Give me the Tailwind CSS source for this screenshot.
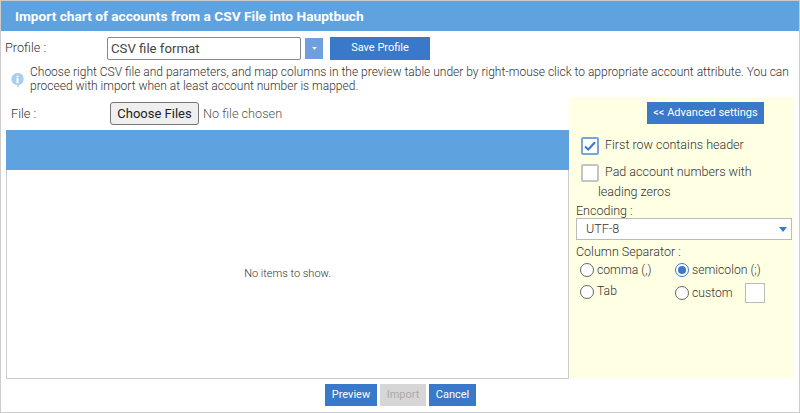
<!DOCTYPE html>
<html lang="en">
<head>
  <meta charset="UTF-8" />
  <title>Import chart of accounts</title>
  <script src="https://cdn.jsdelivr.net/npm/@tailwindcss/browser@4"></script>
</head>
<body class="w-[800px] h-[413px] overflow-hidden bg-white font-['Roboto',sans-serif] font-light text-[#333]">
  <div class="w-[800px] h-[413px] border border-[#ccc] flex flex-col">
    <!-- title -->
    <div class="h-[30px] shrink-0 bg-[#5fa2e0] text-white text-[13.7px] font-bold pl-[14px] leading-[30px]">Import chart of accounts from a CSV File into Hauptbuch</div>

    <!-- profile row -->
    <div class="flex items-center h-[26px] mt-[4px] shrink-0">
      <div class="w-[106px] pl-[4px] text-[12.7px]">Profile :</div>
      <div class="w-[194px] h-[23px] border border-[#888] rounded-[2px] text-[13.2px] leading-[21px] pl-[3px] font-normal text-[#444]">CSV file format</div>
      <div class="w-[18px] h-[21px] ml-[4px] bg-[#6f9fdc] flex items-center justify-center">
        <svg width="5" height="3" viewBox="0 0 6 4"><path d="M0 0h6L3 4z" fill="#fff"/></svg>
      </div>
      <button class="w-[100px] h-[23px] ml-[7px] bg-[#3a78c9] text-white text-[11px] font-normal leading-[21px] pb-[3px]">Save Profile</button>
    </div>

    <!-- info -->
    <div class="flex h-[32px] mt-[4px] shrink-0 text-[12px] leading-[14px]">
      <div class="w-[29px] pl-[9px] pt-[7px] shrink-0">
        <svg width="15" height="16" viewBox="0 0 15 16">
          <path d="M7.5 1a6 6 0 0 1 2 11.7c-.5 1.3-1.6 2.3-3 2.8.6-.9.8-1.7.7-2.5A6 6 0 0 1 7.5 1z" fill="#a9cdf0"/>
          <rect x="6.5" y="3.4" width="2" height="2" rx="1" fill="#fff"/>
          <rect x="6.5" y="6.2" width="2" height="5" fill="#fff"/>
        </svg>
      </div>
      <p class="w-[765px]">Choose right CSV file and parameters, and map columns in the preview table under by right-mouse click to appropriate account attribute. You can proceed with import when at least account number is mapped.</p>
    </div>

    <!-- main area -->
    <div class="flex flex-1 min-h-0">
      <div class="w-[568px] shrink-0 flex flex-col">
        <div class="flex items-center h-[33px] shrink-0">
          <div class="w-[109px] pl-[10px] text-[12.7px] mt-[1px]">File :</div>
          <input type="file" multiple class="w-[300px] text-[12.7px] text-[#555] font-['Roboto',sans-serif] font-light file:bg-[#efefef] file:border file:border-[#767676] file:rounded-[3px] file:text-[#222] file:font-normal file:h-[23px] file:w-[89px] file:mr-[4px] file:text-[13px]" />
        </div>
        <div class="ml-[5px] h-[249px] w-[563px] border border-[#ccc] border-t-0 flex flex-col shrink-0">
          <div class="h-[40px] -mx-px bg-[#5fa2e0] shrink-0"></div>
          <div class="flex-1 flex items-center justify-center text-[11px] text-[#333] pt-[1px]">No items to show.</div>
        </div>
      </div>
      <div class="w-[225px] h-[281px] bg-[#ffffe3] relative shrink-0 pt-[5px]">
        <div class="flex justify-end pr-[30px]">
          <button class="w-[117px] h-[22px] bg-[#3a78c9] text-white text-[11px] font-normal leading-[20px]">&lt;&lt; Advanced settings</button>
        </div>
        <label class="flex items-center mt-[13px] ml-[12px] text-[12.5px]">
          <span class="w-[18px] h-[18px] border-2 border-[#7ba4dc] bg-white rounded-[2px] flex items-center justify-center">
            <svg width="12" height="10" viewBox="0 0 12 10"><path d="M1 5.5l3.2 3L11 1.2" fill="none" stroke="#3a78c9" stroke-width="2"/></svg>
          </span>
          <span class="ml-[6px] -mt-[2px]">First row contains header</span>
        </label>
        <div class="mt-[7px] ml-[12px] text-[12.5px] leading-[20px] w-[190px] h-[40px]">
          <div class="flex items-start">
            <span class="w-[18px] h-[18px] border-2 border-[#c4c4c4] bg-white rounded-[2px] mt-[2px] shrink-0"></span>
            <span class="ml-[6px]">Pad account numbers with</span>
          </div>
          <div class="pl-[17px]">leading zeros</div>
        </div>
        <div class="mt-[1px] ml-[7px] text-[12.5px] leading-[16px]">Encoding :</div>
        <div class="ml-[7px] -mt-[1px] w-[216px] h-[22px] border border-[#bbb] bg-white flex items-center justify-between pl-[9px] pr-[4px] text-[12.5px]">
          <span>UTF-8</span>
          <svg width="8" height="5" viewBox="0 0 8 5"><path d="M0 0h8L4 5z" fill="#3a78c9"/></svg>
        </div>
        <div class="mt-[4px] ml-[7px] text-[12.5px] leading-[16px]">Column Separator :</div>
        <div class="grid grid-cols-[95px_1fr] ml-[11px] text-[12.2px]">
          <label class="flex items-center h-[20px]">
            <span class="w-[14px] h-[14px] rounded-full border border-[#666] bg-white"></span>
            <span class="ml-[3px]">comma (,)</span>
          </label>
          <label class="flex items-center h-[20px]">
            <span class="w-[14px] h-[14px] rounded-full border border-[#3a78c9] bg-white flex items-center justify-center"><span class="w-[8px] h-[8px] rounded-full bg-[#3a78c9]"></span></span>
            <span class="ml-[3px]">semicolon (;)</span>
          </label>
          <label class="flex items-center h-[24px]">
            <span class="w-[14px] h-[14px] rounded-full border border-[#666] bg-white"></span>
            <span class="ml-[3px] -mt-[2px]">Tab</span>
          </label>
          <label class="flex items-center h-[24px] pt-[2px]">
            <span class="w-[14px] h-[14px] rounded-full border border-[#666] bg-white"></span>
            <span class="ml-[3px]">custom</span>
            <span class="w-[20px] h-[20px] ml-[12px] border border-[#bbb] bg-white"></span>
          </label>
        </div>
      </div>
    </div>

    <!-- footer -->
    <div class="flex justify-center gap-[3px] h-[33px] shrink-0 pt-[5px] pl-[1px] text-[11px] font-normal">
      <button class="w-[52px] h-[22px] bg-[#3a78c9] text-white">Preview</button>
      <button class="w-[46px] h-[22px] bg-[#d6d6d6] text-[#aaa]">Import</button>
      <button class="w-[47px] h-[22px] bg-[#3a78c9] text-white">Cancel</button>
    </div>
  </div>
</body>
</html>
